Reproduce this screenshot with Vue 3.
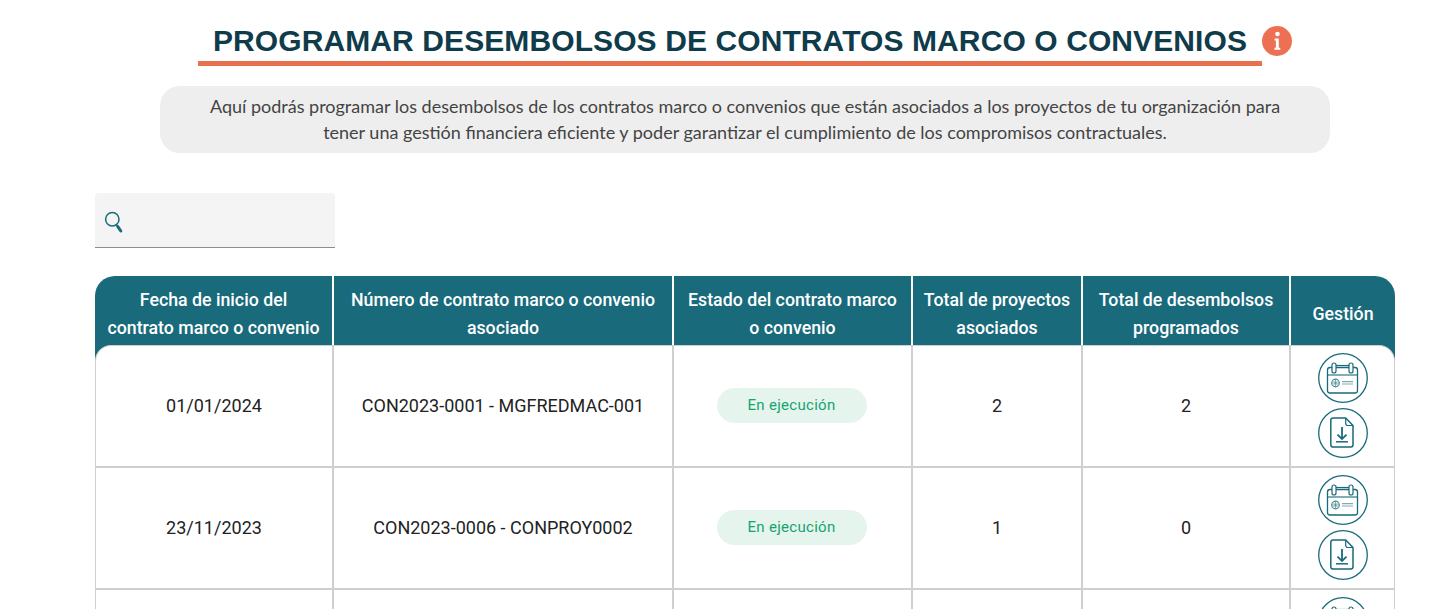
<template>
  <div class="page">
    <div class="title-row">
      <h1 class="title">PROGRAMAR DESEMBOLSOS DE CONTRATOS MARCO O CONVENIOS</h1>
      <span class="info-icon">
        <svg width="30" height="30" viewBox="0 0 30 30">
          <circle cx="15" cy="15" r="15" fill="#ee7052" />
          <circle cx="15.5" cy="8" r="2.3" fill="#fff" />
          <path d="M12.6 12.6h4.2v9.2h1.5v2h-5.8v-2h1.4v-7.2h-1.3z" fill="#fff" />
        </svg>
      </span>
    </div>

    <p class="intro">
      Aquí podrás programar los desembolsos de los contratos marco o convenios que están asociados a los proyectos de tu organización para
      tener una gestión financiera eficiente y poder garantizar el cumplimiento de los compromisos contractuales.
    </p>

    <div class="search">
      <svg width="20" height="26" viewBox="0 0 20 26" fill="none" stroke="#196a7b">
        <circle cx="8.3" cy="11.3" r="6.7" stroke-width="1.5" />
        <path d="M12.4 16.8l1 1.2" stroke-width="1.5" />
        <path d="M13.8 18.6l3 4.4" stroke-width="3" stroke-linecap="round" />
      </svg>
    </div>

    <div class="table-wrap">
      <table>
        <colgroup>
          <col v-for="w in colWidths" :key="w" :style="{ width: w + 'px' }" />
        </colgroup>
        <thead>
          <tr>
            <th>Fecha de inicio del<br />contrato marco o convenio</th>
            <th>Número de contrato marco o convenio<br />asociado</th>
            <th>Estado del contrato marco<br />o convenio</th>
            <th>Total de proyectos<br />asociados</th>
            <th>Total de desembolsos<br />programados</th>
            <th>Gestión</th>
          </tr>
        </thead>
        <tbody>
          <tr v-for="(row, i) in rows" :key="i">
            <td>{{ row.date }}</td>
            <td>{{ row.number }}</td>
            <td><span v-if="row.status" class="status">{{ row.status }}</span></td>
            <td>{{ row.projects }}</td>
            <td>{{ row.payments }}</td>
            <td class="actions">
              <button class="round-btn" type="button">
                <svg width="50" height="50" viewBox="0 0 50 50" fill="none" stroke="#196a7b">
                  <circle cx="25" cy="25" r="24.3" stroke-width="1.3" />
                  <rect x="9.5" y="14.5" width="30" height="25.5" rx="2.5" stroke-width="1.3" />
                  <path d="M9.5 22h30" stroke-width="1.1" />
                  <rect x="14" y="10" width="4" height="10" rx="2" fill="#fff" stroke-width="1.2" />
                  <rect x="31" y="10" width="4" height="10" rx="2" fill="#fff" stroke-width="1.2" />
                  <path d="M18 12.5h13" stroke-width="1.2" />
                  <circle cx="17.5" cy="30" r="3.8" stroke="#4d8a98" stroke-width="1.2" />
                  <path d="M15 27.5l5 5M20 27.5l-5 5M17.5 26.2v7.6M13.7 30h7.6" stroke="#4d8a98" stroke-width="0.7" />
                  <path d="M24 28.7h11M24 31h11" stroke="#7fabb5" stroke-width="1.2" />
                </svg>
              </button>
              <button class="round-btn" type="button">
                <svg width="50" height="50" viewBox="0 0 50 50" fill="none" stroke="#196a7b">
                  <circle cx="25" cy="25" r="24.3" stroke-width="1.3" />
                  <path d="M15 10h12.7l7.3 7.5v19.3a2.2 2.2 0 0 1-2.2 2.2H15a2.2 2.2 0 0 1-2.2-2.2V12.2A2.2 2.2 0 0 1 15 10z" stroke-width="1.5" />
                  <path d="M27.7 10v5.3a2.2 2.2 0 0 0 2.2 2.2H35" stroke-width="1.2" />
                  <path d="M24 19v12M19.5 26.6l4.5 4.5 4.5-4.5" stroke-width="1.8" />
                  <path d="M18 33.8h12" stroke-width="1.5" />
                </svg>
              </button>
            </td>
          </tr>
        </tbody>
      </table>
    </div>
  </div>
</template>

<script setup>
const colWidths = [239, 340, 239, 170, 208, 104]

const rows = [
  { date: '01/01/2024', number: 'CON2023-0001 - MGFREDMAC-001', status: 'En ejecución', projects: 2, payments: 2 },
  { date: '23/11/2023', number: 'CON2023-0006 - CONPROY0002', status: 'En ejecución', projects: 1, payments: 0 },
  { date: '', number: '', status: '', projects: '', payments: '' },
]
</script>

<style scoped>
.page {
  height: 609px;
  overflow: hidden;
  padding-top: 17px;
  box-sizing: border-box;
  font-family: Roboto, "Liberation Sans", sans-serif;
  color: #222;
}
.title-row {
  display: flex;
  align-items: flex-start;
  margin-left: 198px;
}
.title {
  width: 1064px;
  height: 49px;
  box-sizing: border-box;
  margin: 0;
  border-bottom: 5px solid #e8704f;
  font-family: "Liberation Sans", Arial, sans-serif;
  font-size: 30px;
  letter-spacing: 0.1px;
  line-height: 47px;
  font-weight: 700;
  text-align: center;
  color: #0f3b4a;
  white-space: nowrap;
}
.info-icon {
  display: block;
  height: 30px;
  margin-top: 9px;
}
.intro {
  width: 1170px;
  height: 67px;
  box-sizing: border-box;
  margin: 20px 0 0 160px;
  padding: 7px 45px;
  border-radius: 20px;
  background: #eeeeee;
  font-family: Lato, sans-serif;
  font-size: 18px;
  line-height: 26px;
  text-align: center;
  color: #444;
}
.search {
  width: 240px;
  height: 55px;
  box-sizing: border-box;
  margin: 40px 0 0 95px;
  padding: 15px 0 0 9px;
  border-bottom: 1px solid #8d8d8d;
  border-radius: 4px 4px 0 0;
  background: #f4f4f4;
}
.search svg {
  display: block;
}
.table-wrap {
  width: 1300px;
  margin: 28px 0 0 95px;
  border-radius: 20px 20px 0 0;
  background: #196a7b;
}
table {
  width: 1300px;
  table-layout: fixed;
  border-collapse: separate;
  border-spacing: 0;
}
th {
  height: 69px;
  box-sizing: border-box;
  padding: 10px 0 3px;
  border-right: 2px solid #fff;
  font-size: 17.75px;
  line-height: 28px;
  font-weight: 500;
  color: #fff;
  text-align: center;
}
th:last-child {
  border-right: 0;
}
td {
  height: 122px;
  box-sizing: border-box;
  padding: 0 0 2px;
  border-right: 2px solid #cfcfcf;
  border-bottom: 2px solid #cfcfcf;
  background: #fff;
  font-size: 18px;
  text-align: center;
  color: #222;
}
td:first-child {
  border-left: 1px solid #cfcfcf;
}
tbody tr:first-child td {
  height: 123px;
  border-top: 1px solid #cfcfcf;
}
tbody tr:first-child td:first-child {
  border-top-left-radius: 16px;
}
tbody tr:first-child td:last-child {
  border-top-right-radius: 16px;
}
td:last-child {
  border-right: 1px solid #cfcfcf;
}
.status {
  display: inline-block;
  width: 150px;
  height: 35px;
  margin-right: 2px;
  border-radius: 18px;
  background: #e6f4ee;
  font-size: 15px;
  line-height: 34px;
  letter-spacing: 0.3px;
  color: #13a56e;
}
.round-btn {
  display: block;
  width: 50px;
  height: 50px;
  margin: 0 auto;
  padding: 0;
  border: 0;
  background: none;
  cursor: pointer;
}
.round-btn + .round-btn {
  margin-top: 5px;
}
.round-btn svg {
  display: block;
}
</style>

<style>
html,
body {
  margin: 0;
  overflow: hidden;
  background: #fff;
}
</style>
